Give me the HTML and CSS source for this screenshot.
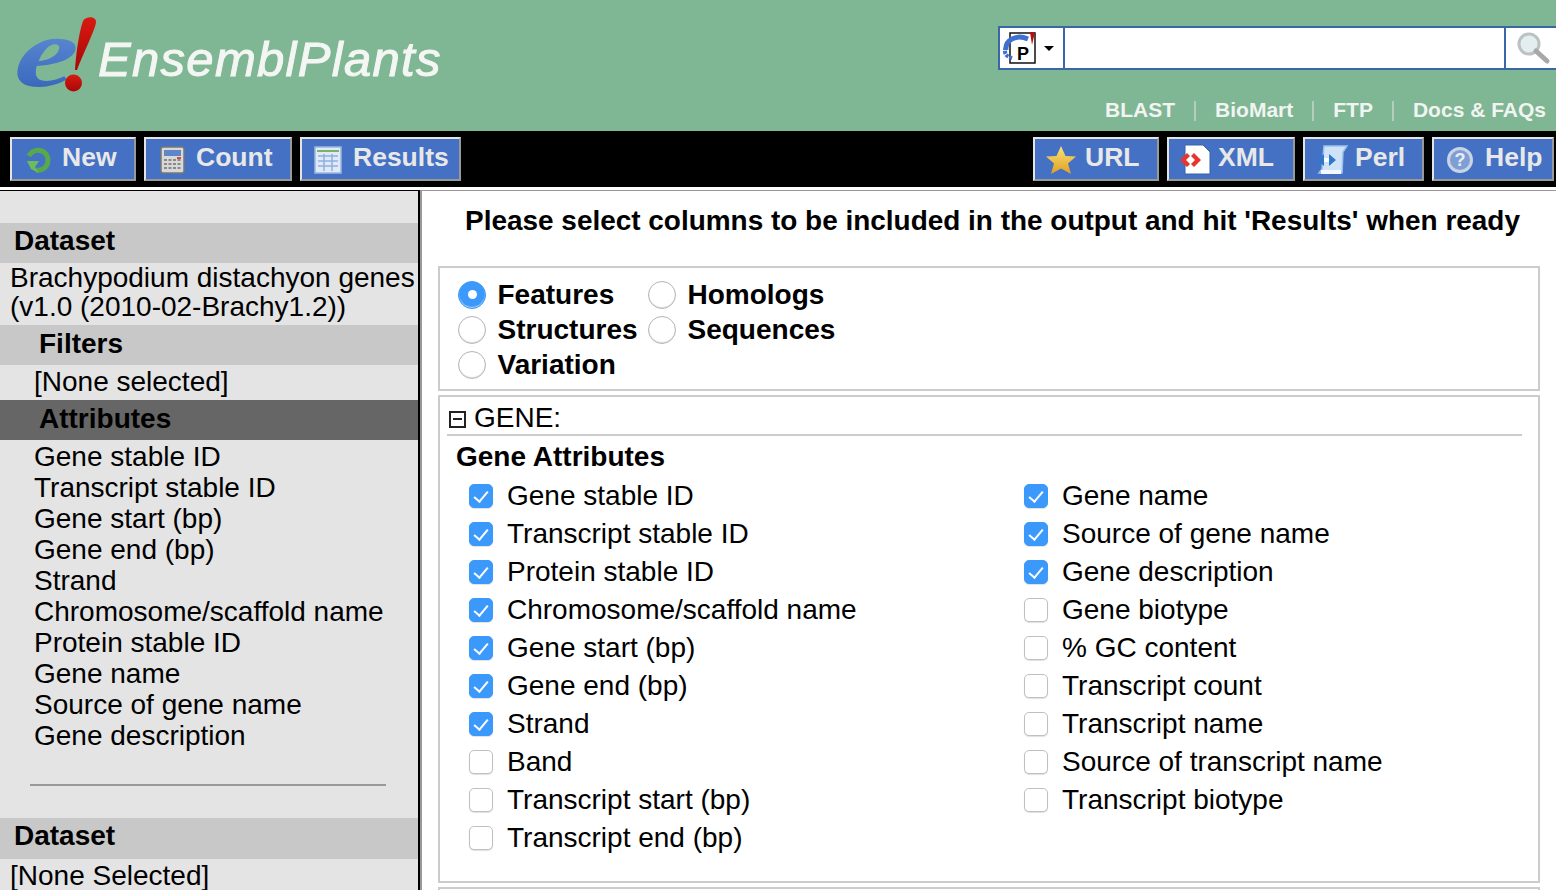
FILE: index.html
```html
<!DOCTYPE html>
<html lang="en">
<head>
  <meta charset="UTF-8" />
  <title>EnsemblPlants - BioMart</title>
  <link rel="stylesheet" href="styles.css">
</head>
<body>
  <svg width="0" height="0" class="defs">
    <defs>
      <linearGradient id="logo-blue" x1="0" y1="0" x2="0" y2="1">
        <stop offset="0" stop-color="#6f9ee0"/><stop offset="1" stop-color="#2f5cb4"/>
      </linearGradient>
      <linearGradient id="logo-red" x1="0" y1="0" x2="0" y2="1">
        <stop offset="0" stop-color="#d81a10"/><stop offset="1" stop-color="#a80808"/>
      </linearGradient>
      <linearGradient id="star-gold" x1="0" y1="0" x2="0" y2="1">
        <stop offset="0" stop-color="#fbe27a"/><stop offset="1" stop-color="#e0a020"/>
      </linearGradient>
    </defs>
  </svg>

  <header class="masthead">
    <div class="logo">
      <svg class="logo-mark" width="84" height="80" viewBox="0 0 84 80">
        <text class="logo-e" transform="translate(-3,70) scale(1.38,1) skewX(-6)" fill="url(#logo-blue)">e</text>
        <path d="M68 5 C71 0 81 0 81 6 C81 12 68 38 62 54 L60 54 C61 38 64 16 68 5 Z" fill="url(#logo-red)"/>
        <circle cx="58.5" cy="67" r="8.5" fill="url(#logo-red)"/>
      </svg>
      <span class="logo-name">EnsemblPlants</span>
    </div>
    <div class="masthead-right">
      <div class="search">
        <div class="search-species">
          <svg width="36" height="36" viewBox="0 0 36 36">
            <path d="M7 3 H32 V33 H7 Z" fill="#fff" stroke="#111" stroke-width="1.5"/>
            <path d="M3 20 C2 10 13 4 25 9" fill="none" stroke="#3f6fd0" stroke-width="5"/>
            <path d="M3 17 C0 24 4 27 10 28" fill="none" stroke="#3f6fd0" stroke-width="4" stroke-dasharray="3 1"/>
            <path d="M27 2 L32 2 L29 15 Z" fill="#b01010"/>
            <text class="species-letter" x="14" y="30">P</text>
          </svg>
          <span class="caret"></span>
        </div>
        <input class="search-input" type="text">
        <div class="search-go">
          <svg width="36" height="34" viewBox="0 0 36 34">
            <circle cx="13" cy="13" r="10" fill="#e4eef0" stroke="#bcc2c2" stroke-width="3"/>
            <path d="M20 20 L31 30" stroke="#a8a8a8" stroke-width="5" stroke-linecap="round"/>
          </svg>
        </div>
      </div>
      <nav class="site-links">
        <a href="#">BLAST</a><span class="sep"></span>
        <a href="#">BioMart</a><span class="sep"></span>
        <a href="#">FTP</a><span class="sep"></span>
        <a href="#">Docs &amp; FAQs</a>
      </nav>
    </div>
  </header>

  <div class="toolbar">
    <a class="tool tool-new" href="#">
      <svg width="28" height="28" viewBox="0 0 28 28">
        <path d="M5 10 A10 10 0 1 1 12 24" fill="none" stroke="#58a84c" stroke-width="5"/>
        <path d="M3 15 H15 L11 21 L15 27 L7 23 Z" fill="#6cbc5c"/>
      </svg>
      New
    </a>
    <a class="tool tool-count" href="#">
      <svg width="26" height="28" viewBox="0 0 26 28">
        <rect x="1" y="1" width="23" height="26" rx="2" fill="#d8d8d8" stroke="#777" stroke-width="1.5"/>
        <rect x="4" y="4" width="17" height="6" fill="#5f86c8"/>
        <rect x="17" y="11" width="4" height="2" fill="#d84a3a"/>
        <path d="M4 14 H21 M4 18 H21 M4 22 H21" stroke="#8a8a8a" stroke-width="2" stroke-dasharray="3 1.5"/>
      </svg>
      Count
    </a>
    <a class="tool tool-results" href="#">
      <svg width="28" height="28" viewBox="0 0 28 28">
        <rect x="1" y="1" width="26" height="26" fill="#dfe9f8" stroke="#9db6dc" stroke-width="1.5"/>
        <rect x="3" y="4" width="22" height="2" fill="#7ab660"/>
        <path d="M4 10 H24 M4 15 H24 M4 20 H24 M10 8 V25 M18 8 V25" stroke="#8fb0e0" stroke-width="1.5"/>
      </svg>
      Results
    </a>
    <a class="tool tool-url" href="#">
      <svg width="32" height="30" viewBox="0 0 32 30">
        <polygon points="16,1 20.5,11 31,11.5 23,18.5 26,29 16,23.5 6,29 9,18.5 1,11.5 11.5,11" fill="url(#star-gold)"/>
      </svg>
      URL
    </a>
    <a class="tool tool-xml" href="#">
      <svg width="32" height="32" viewBox="0 0 32 32">
        <path d="M6 1 H24 L31 8 V30 H6 Z" fill="#fff" stroke="#3b62a8" stroke-width="1"/>
        <path d="M1 16 L8 9 L11 12 L7 16 L11 20 L8 23 Z" fill="#e8352c"/>
        <path d="M22 16 L15 9 L12 12 L16 16 L12 20 L15 23 Z" fill="#e8352c"/>
      </svg>
      XML
    </a>
    <a class="tool tool-perl" href="#">
      <svg width="32" height="32" viewBox="0 0 32 32">
        <path d="M8 2 H31 L27 8 L26 29 H3 L6 25 Z" fill="#cfe2f8" stroke="#9cc2ec" stroke-width="1.5"/>
        <path d="M1 16 L8 10 V22 Z M20 16 L13 10 V22 Z" fill="#2f78d0"/>
        <rect x="8" y="14" width="5" height="4" fill="#fff"/>
        <rect x="5" y="26" width="20" height="4" fill="#f4f8ff"/>
      </svg>
      Perl
    </a>
    <a class="tool tool-help" href="#">
      <svg width="28" height="28" viewBox="0 0 28 28">
        <circle cx="14" cy="14" r="11.5" fill="#7f9ed4" stroke="#c9d4e6" stroke-width="3"/>
        <text class="help-mark" x="14" y="20">?</text>
      </svg>
      Help
    </a>
  </div>

  <div class="page">
    <aside class="sidebar">
      <h2 class="side-head">Dataset</h2>
      <p class="side-dataset">Brachypodium distachyon genes<br>(v1.0 (2010-02-Brachy1.2))</p>
      <h2 class="side-head side-head-sub">Filters</h2>
      <p class="side-none">[None selected]</p>
      <h2 class="side-head side-head-sub side-head-active">Attributes</h2>
      <ul class="side-list">
        <li>Gene stable ID</li>
        <li>Transcript stable ID</li>
        <li>Gene start (bp)</li>
        <li>Gene end (bp)</li>
        <li>Strand</li>
        <li>Chromosome/scaffold name</li>
        <li>Protein stable ID</li>
        <li>Gene name</li>
        <li>Source of gene name</li>
        <li>Gene description</li>
      </ul>
      <hr class="side-rule">
      <h2 class="side-head side-head-last">Dataset</h2>
      <p class="side-bottom">[None Selected]</p>
    </aside>

    <main class="content">
      <h1 class="prompt">Please select columns to be included in the output and hit 'Results' when ready</h1>

      <section class="box box-pages">
        <label class="page-opt"><input type="radio" name="page" checked> Features</label>
        <label class="page-opt"><input type="radio" name="page"> Homologs</label>
        <label class="page-opt"><input type="radio" name="page"> Structures</label>
        <label class="page-opt"><input type="radio" name="page"> Sequences</label>
        <label class="page-opt"><input type="radio" name="page"> Variation</label>
      </section>

      <section class="box box-attrs">
        <div class="group-title"><span class="collapse"></span>GENE:</div>
        <h3 class="group-sub">Gene Attributes</h3>
        <div class="attr-grid">
          <label class="attr"><input type="checkbox" checked> Gene stable ID</label>
          <label class="attr"><input type="checkbox" checked> Gene name</label>
          <label class="attr"><input type="checkbox" checked> Transcript stable ID</label>
          <label class="attr"><input type="checkbox" checked> Source of gene name</label>
          <label class="attr"><input type="checkbox" checked> Protein stable ID</label>
          <label class="attr"><input type="checkbox" checked> Gene description</label>
          <label class="attr"><input type="checkbox" checked> Chromosome/scaffold name</label>
          <label class="attr"><input type="checkbox"> Gene biotype</label>
          <label class="attr"><input type="checkbox" checked> Gene start (bp)</label>
          <label class="attr"><input type="checkbox"> % GC content</label>
          <label class="attr"><input type="checkbox" checked> Gene end (bp)</label>
          <label class="attr"><input type="checkbox"> Transcript count</label>
          <label class="attr"><input type="checkbox" checked> Strand</label>
          <label class="attr"><input type="checkbox"> Transcript name</label>
          <label class="attr"><input type="checkbox"> Band</label>
          <label class="attr"><input type="checkbox"> Source of transcript name</label>
          <label class="attr"><input type="checkbox"> Transcript start (bp)</label>
          <label class="attr"><input type="checkbox"> Transcript biotype</label>
          <label class="attr"><input type="checkbox"> Transcript end (bp)</label>
        </div>
      </section>

      <section class="box box-next"></section>
    </main>
  </div>
</body>
</html>
```

FILE: styles.css
```css
html, body { margin: 0; padding: 0; height: 890px; overflow: hidden; }
body { font-family: "Liberation Sans", Arial, sans-serif; font-size: 28px; color: #000; background: #fff; }
.defs { position: absolute; }
a { text-decoration: none; }

.masthead { height: 131px; background: #7fb694; display: flex; justify-content: space-between; }
.logo { display: flex; align-items: flex-start; padding: 16px 0 0 15px; }
.logo-mark { display: block; overflow: visible; }
.logo-e { font-family: "Liberation Serif", serif; font-style: italic; font-size: 100px; font-weight: bold; }
.logo-name { font-style: italic; font-size: 49px; letter-spacing: 1.3px; color: #f4f6f4; -webkit-text-stroke: 1px #f4f6f4; margin: 15px 0 0 -1px; }

.masthead-right { width: 558px; padding-top: 26px; }
.search { display: flex; height: 44px; box-sizing: border-box; border: 2px solid #3a67a6; border-right: 0; background: #fff; }
.search-species { width: 63px; display: flex; align-items: center; padding-left: 3px; box-sizing: border-box; }
.species-letter { font-size: 18px; font-weight: bold; }
.caret { width: 0; height: 0; border: 5px solid transparent; border-top: 5px solid #000; margin: 6px 0 0 5px; }
.search-input { flex: 1; border: 0; border-left: 2px solid #3a67a6; border-right: 2px solid #3a67a6; padding: 0; outline: 0; }
.search-go { width: 50px; padding: 3px 0 0 10px; box-sizing: border-box; }

.site-links { display: flex; align-items: center; justify-content: flex-end; padding: 28px 10px 0 0; font-size: 21px; font-weight: bold; }
.site-links a { color: #f2f4f2; }
.sep { width: 2px; height: 20px; background: #b4cdbc; margin: 2px 19px 0; }

.toolbar { height: 56px; background: #000; display: flex; gap: 8px; padding: 6px 2px 0 10px; box-sizing: border-box; }
.tool { height: 44px; box-sizing: border-box; display: flex; align-items: center; background: #4471c4; border: 2px solid; border-color: #e4e4e4 #999 #999 #e4e4e4; color: #e8e8e8; font-size: 26.5px; font-weight: bold; padding-bottom: 4px; }
.tool svg { flex: none; margin-top: 5px; }
.tool-new { width: 126px; padding-left: 12px; gap: 10px; }
.tool-count { width: 148px; padding-left: 14px; gap: 10px; }
.tool-results { width: 161px; padding-left: 12px; gap: 11px; }
.tool-url { width: 126px; margin-left: auto; padding-left: 10px; gap: 8px; }
.tool-xml { width: 128px; padding-left: 10px; gap: 7px; }
.tool-perl { width: 121px; padding-left: 11px; gap: 7px; }
.tool-help { width: 122px; padding-left: 12px; gap: 11px; }
.help-mark { font-size: 18px; font-weight: bold; fill: #e8eef8; text-anchor: middle; }

.page { border-top: 2px solid #fff; display: flex; height: 703px; }
.sidebar { width: 418px; flex: none; margin-top: 1px; background: #e4e4e4; border-top: 1px solid #000; border-right: 2px solid #000; padding-top: 32px; box-sizing: content-box; overflow: hidden; }
.side-head { margin: 0; height: 40px; line-height: 36px; font-size: 28px; background: #c8c8c8; padding-left: 14px; }
.side-head-sub { padding-left: 39px; line-height: 37px; }
.side-head-active { background: #666; }
.side-head-last { height: 41px; line-height: 36px; }
.side-dataset { margin: 0; padding-left: 10px; line-height: 29px; height: 62px; white-space: nowrap; }
.side-none { margin: 0; padding-left: 34px; height: 35px; line-height: 34px; }
.side-list { list-style: none; margin: 0; padding: 1px 0 0 34px; }
.side-list li { height: 31px; line-height: 31px; }
.side-rule { border: 0; height: 2px; background: #999; margin: 33px 32px 32px 30px; }
.side-bottom { margin: 0; padding-left: 10px; line-height: 33px; }

.content { flex: 1; min-width: 0; border-top: 1px solid #999; border-left: 2px solid #999; margin-top: 1px; padding: 0 16px 0 16px; }
.prompt { margin: 12px 0 0; padding-left: 7px; height: 63px; line-height: 36px; font-size: 27.95px; text-align: center; white-space: nowrap; }
.box { border: 2px solid #ccc; box-sizing: border-box; margin-bottom: 4px; }

.box-pages { height: 125px; display: grid; grid-template-columns: 190px 1fr; grid-auto-rows: 35px; padding: 9px 0 0 18px; }
.page-opt { display: flex; align-items: center; gap: 11.5px; font-weight: bold; }
.page-opt input { appearance: none; margin: 0; width: 28px; height: 28px; border-radius: 50%; border: 1px solid #b4b4b4; background: #fff; box-shadow: inset 0 -1px 1px #ddd; box-sizing: border-box; display: flex; align-items: center; justify-content: center; }
.page-opt input:checked { background: #3b99fc; border-color: #3b99fc; }
.page-opt input:checked::after { content: ""; width: 9px; height: 9px; border-radius: 50%; background: #fff; }

.box-attrs { height: 488px; padding: 5px 16px 0 7px; }
.group-title { display: flex; align-items: center; height: 32px; line-height: 32px; border-bottom: 2px solid #ccc; }
.collapse { width: 17px; height: 17px; box-sizing: border-box; border: 2px solid #222; margin: 2px 8px 0 2px; position: relative; }
.collapse::after { content: ""; position: absolute; left: 2px; right: 2px; top: 5.5px; height: 2px; background: #222; }
.group-sub { margin: 0; padding-left: 9px; font-size: 28px; height: 41px; line-height: 41px; }
.attr-grid { display: grid; grid-template-columns: 555px 1fr; grid-auto-rows: 38px; padding-left: 22px; }
.attr { display: flex; align-items: center; gap: 14px; }
.attr input { appearance: none; margin: 0; width: 24px; height: 24px; border-radius: 5px; border: 1px solid #c0c0c0; background: #fff; box-shadow: 0 1px 1px #e0e0e0; box-sizing: border-box; position: relative; flex: none; }
.attr input:checked { background: #3b99fc; border-color: #3b99fc; }
.attr input:checked::after { content: ""; position: absolute; left: 7px; top: 3px; width: 6px; height: 12px; border: solid #fff; border-width: 0 2.5px 2.5px 0; transform: rotate(40deg); }

.box-next { height: 40px; }
```
